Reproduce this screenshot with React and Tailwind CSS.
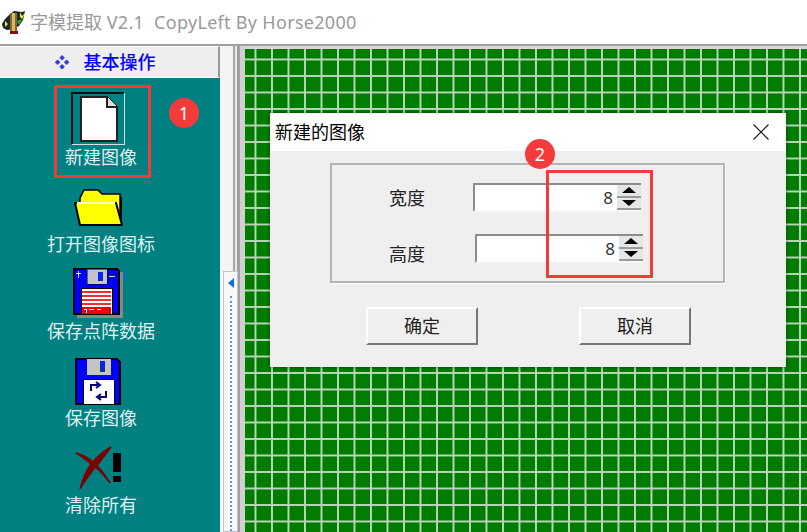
const font = { fontFamily: '"Noto Sans", "Noto Sans CJK SC", sans-serif' };

const AppIcon = () => (
  <svg width="24" height="25" viewBox="0 0 24 25" className="shrink-0">
    <path d="M0 14 L3 9 L8 4 L12 1 L20 2 L23 1 L21 10 L17 16 L12 19 L5 20 L1 18Z" fill="#1a2630" />
    <rect x="8" y="3" width="7" height="18" fill="#8a6a20" />
    <rect x="10" y="3" width="3" height="18" fill="#d2bb62" />
    <rect x="8" y="21" width="8" height="3" fill="#8a1010" />
    <path d="M18 2 L20 6 L23 3 L20 9 L18 7Z M3 11 L6 14 L3 17Z" fill="#f0f020" />
    <path d="M15 11 L20 9 L17 15Z" fill="#30b040" />
  </svg>
);

const NewIcon = () => (
  <svg width="54" height="53" viewBox="0 0 54 53" shapeRendering="crispEdges">
    <path d="M53 1 V52 H1" fill="none" stroke="#cfe3e3" />
    <path d="M1 52 V1 H53" fill="none" stroke="#111" strokeWidth="2" />
    <path d="M10 5 H36 L46 15 V49 H10Z" fill="#fff" stroke="#222" strokeWidth="2" />
    <path d="M36 5 V15 H46" fill="#ddd" stroke="#222" strokeWidth="2" />
  </svg>
);

const FolderIcon = () => (
  <svg width="49" height="40" viewBox="0 0 49 40">
    <path d="M6 10 L10 2 H24 L28 6 H46 V32 H6Z" fill="#ffff00" stroke="#000" strokeWidth="1.5" />
    <path d="M1 15 H42 L48 37 H6Z" fill="#ffff00" stroke="#000" strokeWidth="2" />
    <path d="M3 15 H41" stroke="#fffbb0" strokeWidth="2" />
    <path d="M47 9 V34" stroke="#000" strokeWidth="2" />
  </svg>
);

const FloppyData = () => (
  <svg width="50" height="50" viewBox="0 0 50 50" shapeRendering="crispEdges">
    <rect x="4" y="4" width="46" height="46" fill="#888" />
    <path d="M1 1 H44 L46 3 V46 H1Z" fill="#0000ff" stroke="#000" strokeWidth="1.5" />
    <rect x="14" y="1" width="20" height="15" fill="#c4c4c4" stroke="#000" strokeWidth="0.5" />
    <rect x="25" y="4" width="5" height="9" fill="#0a28d8" />
    <rect x="8" y="20" width="31" height="26" fill="#fff" stroke="#000" />
    <path d="M9 24 H38 M9 28 H38 M9 32 H38 M9 36 H38" stroke="#f03030" strokeWidth="2" />
    <rect x="9" y="39" width="29" height="7" fill="#f00000" />
    <path d="M11 41 H13 V45 M16 41 H21 M24 41 H28" stroke="#fff" />
    <path d="M3 5 H8 M5 3 V10 M36 8 H42" stroke="#dde" />
  </svg>
);

const FloppySave = () => (
  <svg width="46" height="47" viewBox="0 0 46 47" shapeRendering="crispEdges">
    <path d="M1 1 H42 L45 4 V46 H1Z" fill="#0000ff" stroke="#000" strokeWidth="1.5" />
    <rect x="12" y="1" width="24" height="16" fill="#c4c4c4" />
    <rect x="25" y="3" width="5" height="11" fill="#0a28d8" />
    <rect x="8" y="21" width="31" height="25" fill="#fff" stroke="#000" />
    <path d="M16 33 V27 H23 M21 24 L25 27 L21 30" fill="none" stroke="#000080" strokeWidth="2" shapeRendering="auto" />
    <path d="M31 33 V39 H24 M26 36 L22 39 L26 42" fill="none" stroke="#000080" strokeWidth="2" shapeRendering="auto" />
  </svg>
);

const ClearIcon = () => (
  <svg width="47" height="44" viewBox="0 0 47 44">
    <path d="M1 7 C14 10 26 22 35 37 C26 25 24 24 20 21 C14 30 9 36 5 43 C8 32 11 25 16 18 C11 13 6 10 1 7Z M17 17 C22 11 29 5 36 1 C31 8 26 14 21 21Z" fill="#7d0000" stroke="#7d0000" strokeWidth="1.5" />
    <rect x="38" y="7" width="8" height="19" fill="#000" />
    <rect x="38" y="30" width="8" height="6" fill="#000" />
  </svg>
);

const tools = [
  { label: '新建图像', icon: <NewIcon />, gap: '-mb-[1px]' },
  { label: '打开图像图标', icon: <FolderIcon />, gap: 'mb-[3px]' },
  { label: '保存点阵数据', icon: <FloppyData />, gap: 'mb-0' },
  { label: '保存图像', icon: <FloppySave />, gap: 'mb-0' },
  { label: '清除所有', icon: <ClearIcon />, gap: 'mb-[2px]' },
];

const Spinner = () => (
  <div className="flex w-[24px] flex-col self-stretch">
    <div className="flex flex-1 items-center justify-center border-b-2 border-[#9a9a9a] bg-[#e6e6e6]">
      <div className="h-0 w-0 border-x-[7px] border-b-[6px] border-x-transparent border-b-black" />
    </div>
    <div className="flex flex-1 items-center justify-center border-b-2 border-[#9a9a9a] bg-[#e6e6e6]">
      <div className="h-0 w-0 border-x-[7px] border-t-[6px] border-x-transparent border-t-black" />
    </div>
  </div>
);

const SizeRow = ({ label, indent, labelGap, className }) => (
  <div className={`flex h-[29px] items-center ${className}`}>
    <span className={`w-[36px] text-[18px] leading-none text-[#222] ${labelGap}`}>{label}</span>
    <div className={`flex h-[29px] w-[168px] items-center border-y-2 border-l-2 border-t-[#8c8c8c] border-l-[#8c8c8c] border-b-[#f8f8f8] bg-white ${indent}`}>
      <span className="flex-1 pr-[4px] text-right text-[17px] leading-none text-[#333]">8</span>
      <Spinner />
    </div>
  </div>
);

const DialogButton = ({ label }) => (
  <button className="h-[38px] w-[112px] border-2 border-t-white border-l-white border-r-[#777] border-b-[#777] bg-[#efefef] text-[18px] leading-none text-[#222]">
    {label}
  </button>
);

const Badge = ({ children, className }) => (
  <div className={`absolute flex h-[30px] w-[30px] items-center justify-center rounded-full bg-[#f53a3a] text-[18px] leading-none text-white ${className}`}>
    {children}
  </div>
);

export default function App() {
  return (
    <div className="relative flex h-[532px] w-[807px] flex-col overflow-hidden bg-white" style={font}>
      <div className="flex h-[44px] items-center gap-[4px] pl-[2px] text-[18px] text-[#999]">
        <AppIcon />
        <span className="whitespace-pre">字模提取 <span className="tracking-[0.3px]">V2.1  CopyLeft By Horse2000</span></span>
      </div>

      <div className="flex min-h-0 flex-1 border-t-2 border-[#a0a0a0]">
        <aside className="flex w-[220px] shrink-0 flex-col bg-[#008080]">
          <div className="flex h-[32px] shrink-0 items-center justify-center gap-[14px] border-y border-y-white border-r-2 border-r-[#999] bg-[#eeeeee] pr-[8px] text-[18px] font-medium text-[#0000ff]">
            <span className="text-[15px] leading-none text-[#3a3ae0]">❖</span>
            <span className="pt-[1px]">基本操作</span>
          </div>
          <div className="w-[202px] pt-[4px]">
            {tools.map((tool) => (
              <div key={tool.label} className="flex h-[87px] flex-col items-center justify-end">
                <div className={`mr-[6px] ${tool.gap}`}>{tool.icon}</div>
                <span className="relative mt-[1px] text-[18px] leading-[24px] whitespace-nowrap text-[#dff0f0]">{tool.label}</span>
              </div>
            ))}
          </div>
        </aside>

        <div className="flex w-[20px] shrink-0">
          <div className="relative z-10 flex w-[13px] flex-col bg-[#f4f4f4] pt-[225px]">
            <div className="ml-[3px] flex h-[262px] w-[15px] flex-col items-center border border-[#c4c4c4] bg-[#f8f8f8] pt-[6px]">
              <div className="h-0 w-0 border-y-[5px] border-r-[6px] border-y-transparent border-r-[#1070e0]" />
              <div className="mt-[8px] flex-1 border-l-2 border-dotted border-[#4aa0e8]" />
            </div>
          </div>
          <div className="w-[2px] bg-[#a8a8a8]" />
          <div className="w-[2px] bg-[#e8e8e8]" />
          <div className="w-[3px] bg-[#a0a0a0]" />
        </div>

        <main className="min-w-0 flex-1 border-t-[3px] border-l-[5px] border-t-[#d8d8d8] border-l-[#d0d0d0] bg-[#007c00] bg-[linear-gradient(to_right,#8cbc8c_0,#e4eee4_1px,#8cbc8c_2px,transparent_2px),linear-gradient(to_bottom,#8cbc8c_0,#e4eee4_1px,#8cbc8c_2px,transparent_2px)] bg-[size:16.5px_16.5px] bg-[position:9.5px_9.5px]" />
      </div>

      {/* dialog window */}
      <div className="absolute top-[113px] left-[270px] flex h-[254px] w-[516px] flex-col bg-[#efefef] shadow-[0_0_4px_rgba(0,0,0,0.45)]">
        <div className="flex h-[38px] shrink-0 items-center justify-between bg-white pr-[17px] pl-[5px] text-[18px] text-black">
          <span>新建的图像</span>
          <svg width="16" height="16" viewBox="0 0 16 16">
            <path d="M0.5 0.5 L15.5 15.5 M15.5 0.5 L0.5 15.5" stroke="#111" strokeWidth="1.1" />
          </svg>
        </div>
        <div className="mt-[12px] ml-[60px] h-[120px] w-[395px] border-2 border-[#b4b4b4] pt-[18px] pl-[57px] shadow-[1px_1px_0_#fff]">
          <SizeRow label="宽度" indent="ml-[48px]" labelGap="mt-[1px]" />
          <SizeRow label="高度" indent="ml-[50px]" labelGap="mt-[11px]" className="mt-[22px]" />
        </div>
        <div className="mt-[24px] ml-[96px] flex gap-[101px]">
          <DialogButton label="确定" />
          <DialogButton label="取消" />
        </div>
      </div>

      {/* annotations */}
      <div className="absolute top-[85px] left-[54px] h-[93px] w-[97px] border-[3px] border-[#f53a3a]" />
      <Badge className="top-[98px] left-[169px]">1</Badge>
      <div className="absolute top-[170px] left-[546px] h-[108px] w-[107px] border-[3px] border-[#f53a3a]" />
      <Badge className="top-[139px] left-[525px]">2</Badge>
    </div>
  );
}
